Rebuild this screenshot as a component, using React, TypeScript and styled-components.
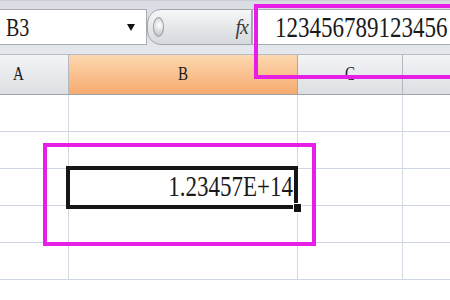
import React from 'react';
import styled, { createGlobalStyle } from 'styled-components';

const GlobalStyle = createGlobalStyle`
  html, body {
    margin: 0;
    padding: 0;
    background: #fff;
    overflow: hidden;
  }
`;

const serif = `"Liberation Serif", "DejaVu Serif", serif`;

const Page = styled.div`
  position: relative;
  width: 450px;
  height: 300px;
  overflow: hidden;
  background: #fff;
  font-family: ${serif};
`;

const Toolbar = styled.div`
  display: flex;
  height: 55px;
  box-sizing: border-box;
  padding: 8px 0 9px;
  background: linear-gradient(#d9dde3, #e4e7eb);
  border-top: 1px solid #c9cdd3;
  border-bottom: 1px solid #b8bcc2;
`;

const NameBox = styled.div`
  flex: 0 0 147px;
  display: flex;
  align-items: center;
  justify-content: space-between;
  box-sizing: border-box;
  padding: 0 11px 0 6px;
  background: #fff;
  border: 1px solid #a9adb3;
  border-left: none;
`;

const Tall = styled.span<{ $size: number }>`
  display: inline-block;
  font-size: ${(p) => p.$size}px;
  line-height: 1;
  color: #1a1a1a;
  transform: scaleY(1.3);
`;

const Arrow = styled.span`
  width: 0;
  height: 0;
  border-left: 4px solid transparent;
  border-right: 4px solid transparent;
  border-top: 7px solid #111;
`;

const Splitter = styled.div`
  flex: 0 0 105px;
  display: flex;
  align-items: center;
  justify-content: space-between;
  box-sizing: border-box;
  padding: 0 3px 0 5px;
  background: linear-gradient(#f6f7f8, #d5d8dc);
  border: 1px solid #a3a7ad;
  border-radius: 14px 0 0 14px;
`;

const Grip = styled.span`
  width: 9px;
  height: 18px;
  border-radius: 50%;
  background: radial-gradient(circle at 60% 40%, #ffffff, #b6b9be);
  border: 1px solid #9a9ea4;
`;

const Fx = styled.span`
  font-family: ${serif};
  font-style: italic;
  font-size: 20px;
  color: #3c3c3c;
  letter-spacing: -1px;
`;

const FormulaInput = styled.div`
  flex: 1;
  min-width: 0;
  display: flex;
  align-items: center;
  padding-left: 22px;
  background: #fff;
  border: 1px solid #a9adb3;
  border-right: none;
  overflow: hidden;
  white-space: nowrap;
`;

const Grid = styled.div`
  display: grid;
  grid-template-columns: 69px 229px 105px 120px;
`;

const HeaderCell = styled.div<{ $active?: boolean; $align?: string }>`
  display: flex;
  align-items: center;
  justify-content: ${(p) => p.$align ?? 'center'};
  padding-left: ${(p) => (p.$align ? '13px' : '0')};
  height: 39px;
  background: ${(p) =>
    p.$active ? 'linear-gradient(#fcd8b0, #f6aa6e)' : 'linear-gradient(#f3f4f6, #dcdfe3)'};
  border-right: 1px solid ${(p) => (p.$active ? '#e59a5c' : '#b4b8be')};
  border-bottom: 1px solid #9da2a9;
`;

const Cell = styled.div<{ $align?: string }>`
  display: flex;
  align-items: flex-end;
  justify-content: ${(p) => p.$align ?? 'flex-start'};
  height: 37px;
  box-sizing: border-box;
  padding: 0 4px 7px 0;
  border-right: 1px solid #d4d8e2;
  border-bottom: 1px solid #cfd5e8;
`;

const Selection = styled.div`
  position: absolute;
  left: 66px;
  top: 166px;
  width: 232px;
  height: 43px;
  box-sizing: border-box;
  border: 4px solid #161616;
`;

const FillHandle = styled.div`
  position: absolute;
  left: 293px;
  top: 203px;
  width: 7px;
  height: 8px;
  background: #111;
  border: 1px solid #fff;
`;

const Mark = styled.div<{ $l: number; $t: number; $w: number; $h: number }>`
  position: absolute;
  left: ${(p) => p.$l}px;
  top: ${(p) => p.$t}px;
  width: ${(p) => p.$w}px;
  height: ${(p) => p.$h}px;
  box-sizing: border-box;
  border: 4px solid #e61ee6;
`;

const columns = ['A', 'B', 'C', 'D'];
const rows = [1, 2, 3, 4, 5];

const App: React.FC = () => (
  <Page>
    <GlobalStyle />
    <Toolbar>
      <NameBox>
        <Tall $size={20}>B3</Tall>
        <Arrow />
      </NameBox>
      <Splitter>
        <Grip />
        <Fx>fx</Fx>
      </Splitter>
      <FormulaInput>
        <Tall $size={23}>123456789123456</Tall>
      </FormulaInput>
    </Toolbar>
    <Grid>
      {columns.map((c) => (
        <HeaderCell key={c} $active={c === 'B'} $align={c === 'A' ? 'flex-start' : undefined}>
          <Tall $size={15}>{c}</Tall>
        </HeaderCell>
      ))}
      {rows.map((r) =>
        columns.map((c) => (
          <Cell key={`${c}${r}`} $align="flex-end">
            {r === 3 && c === 'B' ? <Tall $size={23}>1.23457E+14</Tall> : null}
          </Cell>
        ))
      )}
    </Grid>
    <Selection />
    <FillHandle />
    <Mark $l={43} $t={143} $w={273} $h={103} />
    <Mark $l={254} $t={4} $w={220} $h={75} />
  </Page>
);

export default App;
